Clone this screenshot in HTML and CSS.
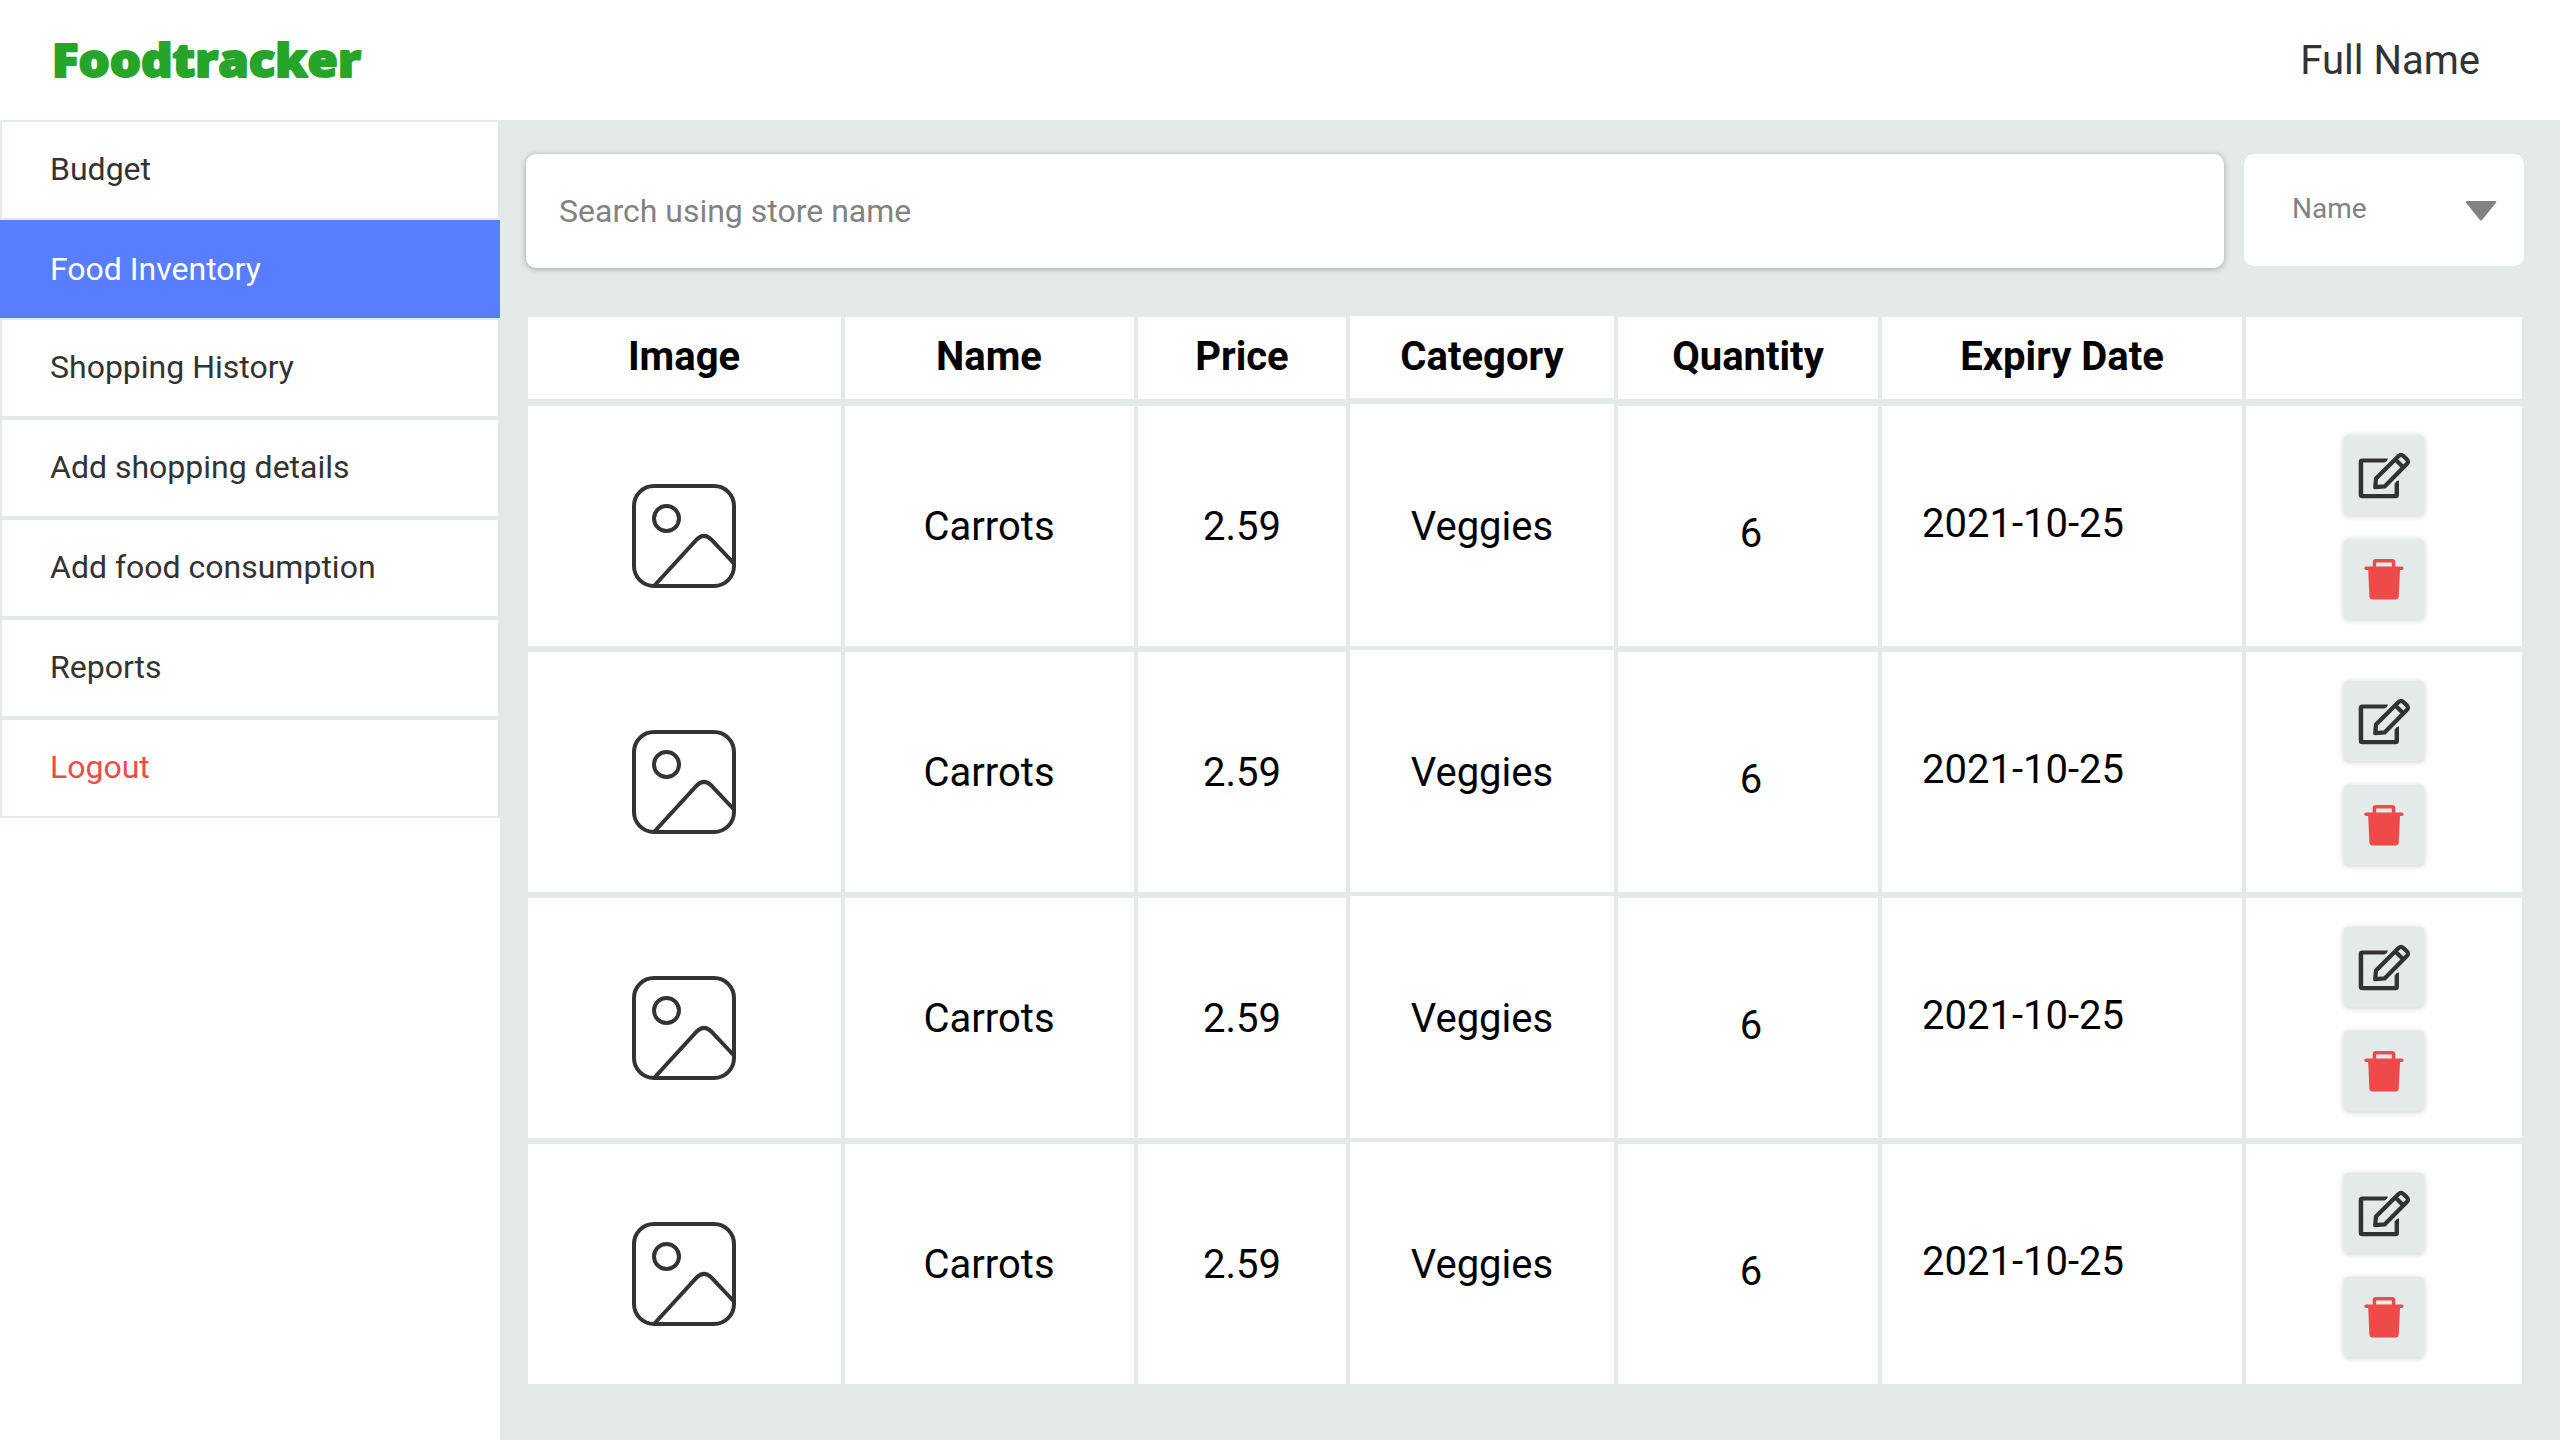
FILE: index.html
```
<!DOCTYPE html>
<html lang="en">
<head>
<meta charset="utf-8">
<title>Foodtracker</title>
<link rel="stylesheet" href="styles.css">
</head>
<body>
<svg class="sprite" aria-hidden="true">
  <symbol id="icon-image" viewBox="0 0 104 104">
    <g fill="none" stroke="#333" stroke-width="4">
      <rect x="2" y="2" width="100" height="100" rx="20"/>
      <circle cx="34.5" cy="34.5" r="12.5"/>
      <path d="M22.5 101.5 65 55.2Q72 48.4 79 55.2L101.5 79"/>
    </g>
  </symbol>
  <symbol id="icon-edit" viewBox="0 0 80 80">
    <path fill="#333" d="M44 23.4H18.2a3.5 3.5 0 0 0-3.5 3.5V59.8a3.5 3.5 0 0 0 3.5 3.5H51.5a3.5 3.5 0 0 0 3.5-3.5V45.2Q52.400 45.600 50.600 48.600V59H19.2V27.600H40.500Q43.500 26.200 44 23.400Z"/>
    <path fill="none" stroke="#333" stroke-width="4.200" stroke-linejoin="round" d="M31.200 52.200 32 43.500 54.600 21Q57 18.700 59.400 21L62.800 24.300Q65.200 26.700 62.800 29L40.600 51.400ZM51.400 24.600 59.200 32.200"/>
  </symbol>
  <symbol id="icon-trash" viewBox="0 0 80 80">
    <path fill="none" stroke="#ee4a4a" stroke-width="3.400" d="M30.400 29V23.200Q30.400 21.800 31.800 21.800H48.200Q49.600 21.800 49.600 23.200V29"/>
    <path fill="#ee4a4a" d="M22 27.500H57.800a1.700 1.700 0 0 1 0 3.500H56L54.700 58Q54.500 60.400 52 60.400H28Q25.600 60.400 25.400 58L24.200 31H22a1.700 1.700 0 0 1 0-3.500Z"/>
  </symbol>
</svg>

<header class="topbar">
  <svg class="logo" width="330" height="100" viewBox="0 0 330 100" role="img" aria-label="Foodtracker">
    <text class="logo-text" x="2" y="66.500" textLength="309" lengthAdjust="spacingAndGlyphs">Foodtracker</text>
  </svg>
  <span class="user">Full Name</span>
</header>

<div class="layout">
  <nav class="sidebar">
    <a class="nav-item">Budget</a>
    <a class="nav-item active">Food Inventory</a>
    <a class="nav-item">Shopping History</a>
    <a class="nav-item">Add shopping details</a>
    <a class="nav-item">Add food consumption</a>
    <a class="nav-item">Reports</a>
    <a class="nav-item logout">Logout</a>
  </nav>

  <main class="content">
    <div class="filters">
      <div class="search">Search using store name</div>
      <div class="select">
        <span>Name</span>
        <svg width="32" height="20" viewBox="0 0 32 20"><path fill="#828282" d="M2 0H30Q32 0 31 1.800L17.500 18.500Q16 20.300 14.500 18.500L1 1.800Q0 0 2 0Z"/></svg>
      </div>
    </div>

    <div class="table">
      <div class="cell head shifted">Image</div>
      <div class="cell head shifted">Name</div>
      <div class="cell head">Price</div>
      <div class="cell head category">Category</div>
      <div class="cell head">Quantity</div>
      <div class="cell head">Expiry Date</div>
      <div class="cell head"></div>

      <div class="cell image"><svg width="104" height="104"><use href="#icon-image"/></svg></div>
      <div class="cell name">Carrots</div>
      <div class="cell">2.59</div>
      <div class="cell category">Veggies</div>
      <div class="cell quantity">6</div>
      <div class="cell date">2021-10-25</div>
      <div class="cell actions"><button class="action"><svg width="80" height="80"><use href="#icon-edit"/></svg></button><button class="action"><svg width="80" height="80"><use href="#icon-trash"/></svg></button></div>

      <div class="cell image"><svg width="104" height="104"><use href="#icon-image"/></svg></div>
      <div class="cell name">Carrots</div>
      <div class="cell">2.59</div>
      <div class="cell category">Veggies</div>
      <div class="cell quantity">6</div>
      <div class="cell date">2021-10-25</div>
      <div class="cell actions"><button class="action"><svg width="80" height="80"><use href="#icon-edit"/></svg></button><button class="action"><svg width="80" height="80"><use href="#icon-trash"/></svg></button></div>

      <div class="cell image"><svg width="104" height="104"><use href="#icon-image"/></svg></div>
      <div class="cell name">Carrots</div>
      <div class="cell">2.59</div>
      <div class="cell category">Veggies</div>
      <div class="cell quantity">6</div>
      <div class="cell date">2021-10-25</div>
      <div class="cell actions"><button class="action"><svg width="80" height="80"><use href="#icon-edit"/></svg></button><button class="action"><svg width="80" height="80"><use href="#icon-trash"/></svg></button></div>

      <div class="cell image"><svg width="104" height="104"><use href="#icon-image"/></svg></div>
      <div class="cell name">Carrots</div>
      <div class="cell">2.59</div>
      <div class="cell category">Veggies</div>
      <div class="cell quantity">6</div>
      <div class="cell date">2021-10-25</div>
      <div class="cell actions"><button class="action"><svg width="80" height="80"><use href="#icon-edit"/></svg></button><button class="action"><svg width="80" height="80"><use href="#icon-trash"/></svg></button></div>
    </div>
  </main>
</div>
</body>
</html>
```
FILE: styles.css
```
* {
  box-sizing: border-box;
}

body {
  margin: 0;
  height: 1440px;
  display: flex;
  flex-direction: column;
  overflow: hidden;
  background: #fff;
  color: #333;
  font-family: Roboto, "Liberation Sans", sans-serif;
}

svg {
  display: block;
}

.sprite {
  display: none;
}

.topbar {
  flex: none;
  height: 120px;
  display: flex;
  align-items: center;
  justify-content: space-between;
  padding: 0 80px 0 50px;
}

.logo {
  overflow: visible;
}

.logo-text {
  font-family: "Open Sans", "Noto Sans", sans-serif;
  font-size: 46px;
  font-weight: 800;
  fill: #27a52a;
  stroke: #27a52a;
  stroke-width: 2px;
  stroke-linejoin: round;
}

.user {
  font-size: 40px;
}

.layout {
  flex: 1;
  display: flex;
}

.sidebar {
  width: 500px;
  display: flex;
  flex-direction: column;
}

.nav-item {
  height: 100px;
  display: flex;
  align-items: center;
  padding: 0 48px 2px;
  border: 2px solid #e4eaea;
  font-size: 32px;
}

.nav-item.active {
  height: 98px;
  padding: 0 50px;
  border: 0;
  background: #587dff;
  color: #fff;
}

.nav-item.logout {
  color: #ee4a4a;
}

.content {
  flex: 1;
  padding: 34px 36px 0 26px;
  background: #e4eaea;
}

.filters {
  display: flex;
  align-items: flex-start;
  gap: 20px;
}

.search {
  flex: 1;
  height: 114px;
  display: flex;
  align-items: center;
  padding: 0 33px;
  border-radius: 10px;
  background: #fff;
  box-shadow: 0 1px 6px rgba(0, 0, 0, 0.3);
  color: #828282;
  font-size: 32px;
}

.select {
  width: 280px;
  height: 112px;
  display: flex;
  align-items: center;
  justify-content: space-between;
  padding: 0 27px 0 48px;
  border-radius: 10px;
  background: #fff;
  color: #828282;
  font-size: 28px;
}

.select span {
  padding-bottom: 3px;
}

.select svg {
  margin-top: 2px;
}

.table {
  display: grid;
  grid-template-columns: 313px 289px 208px 264px 260px 360px 276px;
  grid-template-rows: 84px repeat(4, 240px);
  gap: 6px 4px;
  margin: 48px 0 0 2px;
}

.cell {
  display: flex;
  align-items: center;
  justify-content: center;
  background: #fff;
  color: #000;
  font-size: 40px;
}

.cell.category {
  margin-top: -2px;
  padding-top: 2px;
}

.cell.head {
  margin: 1px 0;
  padding: 0 0 3px;
  font-weight: 700;
}

.cell.head.shifted {
  padding-right: 1px;
}

.cell.head.category {
  margin: 0 0 2px;
  padding-bottom: 1px;
}

.cell.image {
  padding: 20px 1px 0 0;
}

.cell.name {
  padding-right: 1px;
}

.cell.quantity {
  padding: 14px 0 0 6px;
}

.cell.date {
  justify-content: flex-start;
  padding: 0 0 6px 40px;
}

.cell.actions {
  flex-direction: column;
  gap: 24px;
  padding: 2px 1px 0 0;
}

.action {
  width: 80px;
  height: 80px;
  padding: 0;
  border: 0;
  border-radius: 4px;
  background: #e4eaea;
  box-shadow: 0 1px 6px rgba(0, 0, 0, 0.2);
}
```
